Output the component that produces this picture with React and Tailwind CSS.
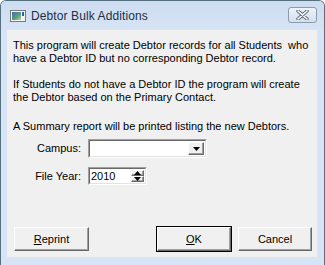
import React from 'react';

// classic sunken / raised edges
const sunken = 'border border-t-[#a0a0a0] border-l-[#a0a0a0] border-r-white border-b-white';
const raised =
  'border border-t-white border-l-white border-r-[#696969] border-b-[#696969] shadow-[inset_-1px_-1px_0_#a0a0a0]';

function WindowIcon() {
  return (
    <svg width="16" height="12" viewBox="0 0 16 12">
      <defs>
        <linearGradient id="wi" x1="0" y1="0" x2="1" y2="1">
          <stop offset="0" stopColor="#3f6fb0" />
          <stop offset="0.6" stopColor="#5fa07a" />
          <stop offset="1" stopColor="#b9d3a4" />
        </linearGradient>
      </defs>
      <rect x="0.5" y="0.5" width="15" height="11" fill="#f4f4f4" stroke="#7a7a7a" />
      <rect x="2" y="2" width="9" height="8" fill="url(#wi)" />
      <rect x="12" y="2" width="2" height="4" fill="#2b5fb8" />
    </svg>
  );
}

function CloseButton() {
  return (
    <div className="w-[29px] h-[16px] rounded-[3px] border border-[#8a9bb0] bg-gradient-to-b from-[#eef3fa] to-[#d3dfee] flex items-center justify-center">
      <svg width="13" height="10" viewBox="0 0 13 10">
        <path d="M2 1 L11 9 M11 1 L2 9" stroke="#5c6b7d" strokeWidth="3.4" strokeLinecap="round" />
        <path d="M2 1 L11 9 M11 1 L2 9" stroke="#ffffff" strokeWidth="1.6" strokeLinecap="round" />
      </svg>
    </div>
  );
}

function Button({ children, isDefault, className = '' }) {
  return (
    <div
      className={`h-[24px] flex items-center justify-center bg-[#f0f0f0] ${
        isDefault ? 'outline outline-1 outline-[#000]' : ''
      } ${raised} ${className}`}
    >
      {children}
    </div>
  );
}

export default function App() {
  return (
    <div
      className="w-[325px] h-[265px] bg-[#d6e4f5] border-l border-t border-r border-[#55707f] rounded-tl-[6px] rounded-tr-[6px] flex flex-col overflow-hidden"
      style={{ fontFamily: '"Liberation Sans", Arial, sans-serif' }}
    >
      {/* title bar */}
      <div className="h-[29px] flex items-center pl-[9px] pr-[7px] bg-gradient-to-b from-[#cddcf0] to-[#d6e4f5]">
        <WindowIcon />
        <span className="ml-[5px] text-[12px] text-[#1e2f45] tracking-[0.1px]">Debtor Bulk Additions</span>
        <div className="ml-auto -mt-[2px]">
          <CloseButton />
        </div>
      </div>

      {/* client area */}
      <div className="mx-[6px] w-[310px] h-[227px] bg-[#f0f0f0] flex flex-col text-[11px] leading-[13px] text-black">
        <div className="pl-[6px] pt-[9px]">
          <p>
            This program will create Debtor records for all Students&nbsp; who
            <br />
            have a Debtor ID but no corresponding Debtor record.
          </p>
          <p className="mt-[13px]">
            If Students do not have a Debtor ID the program will create
            <br />
            the Debtor based on the Primary Contact.
          </p>
          <p className="mt-[16px]">A Summary report will be printed listing the new Debtors.</p>
        </div>

        <div className="mt-[6px] flex items-center">
          <span className="w-[74px] text-right">Campus:</span>
          <div className={`ml-[7px] w-[119px] h-[19px] bg-white ${sunken} flex justify-end`}>
            <div className="border border-t-[#696969] border-l-[#696969] border-r-[#e3e3e3] border-b-[#e3e3e3] flex-1 flex justify-end p-[1px]">
              <div className={`w-[16px] h-full bg-[#f0f0f0] ${raised} flex items-center justify-center`}>
                <svg width="7" height="4" viewBox="0 0 7 4">
                  <path d="M0 0 H7 L3.5 4 Z" fill="#000" />
                </svg>
              </div>
            </div>
          </div>
        </div>

        <div className="mt-[9px] flex items-center">
          <span className="w-[74px] text-right">File Year:</span>
          <div className={`ml-[7px] w-[59px] h-[18px] bg-white ${sunken} flex`}>
            <div className="border border-t-[#696969] border-l-[#696969] border-r-[#e3e3e3] border-b-[#e3e3e3] flex-1 flex items-stretch">
              <span className="pl-[1px] flex-1 flex items-center">2010</span>
              <div className="w-[15px] flex flex-col p-[1px] pr-[1px]">
                <div className={`flex-1 bg-[#f0f0f0] ${raised} flex items-center justify-center`}>
                  <svg width="7" height="4" viewBox="0 0 7 4">
                    <path d="M0 4 H7 L3.5 0 Z" fill="#000" />
                  </svg>
                </div>
                <div className={`flex-1 bg-[#f0f0f0] ${raised} flex items-center justify-center`}>
                  <svg width="7" height="4" viewBox="0 0 7 4">
                    <path d="M0 0 H7 L3.5 4 Z" fill="#000" />
                  </svg>
                </div>
              </div>
            </div>
          </div>
        </div>

        <div className="mt-auto mb-[6px] flex items-center pl-[7px] pr-[5px]">
          <Button className="w-[75px]">
            <span>
              <u>R</u>eprint
            </span>
          </Button>
          <Button isDefault className="w-[74px] ml-auto">
            <span>
              <u>O</u>K
            </span>
          </Button>
          <Button className="w-[74px] ml-[7px]">Cancel</Button>
        </div>
      </div>
    </div>
  );
}
